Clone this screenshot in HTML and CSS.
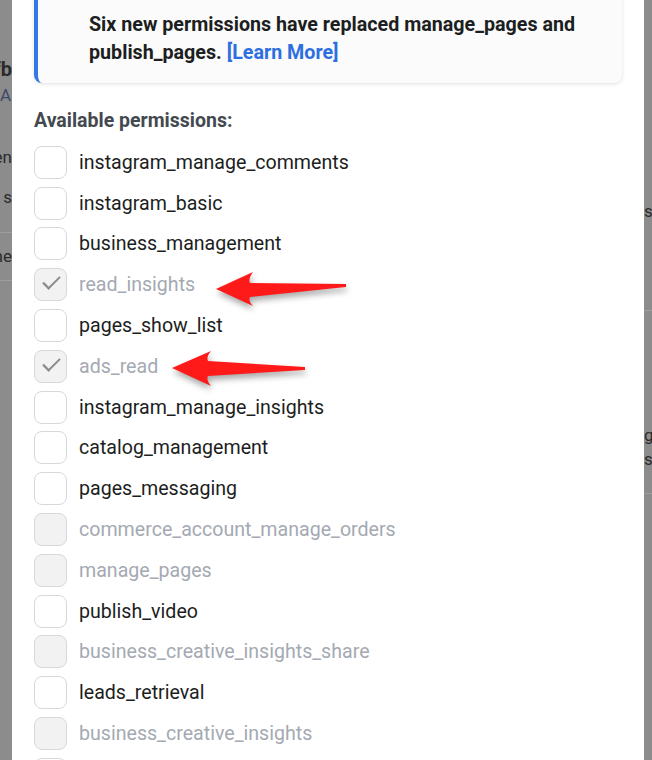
FILE: index.html
```html
<!DOCTYPE html>
<html>
<head>
  <title>Permissions</title>
  <link rel="stylesheet" href="styles.css">
</head>
<body>
  <div class="screen">
    <!-- the page behind the dialog, dimmed -->
    <div class="page-edge left">
      <div class="frag" style="height: 58px"></div>
      <div class="frag bold">fb</div>
      <div class="frag soft">A</div>
      <div class="frag" style="height: 36px"></div>
      <div class="frag">en</div>
      <div class="frag" style="height: 18px"></div>
      <div class="frag">s</div>
      <div class="frag" style="height: 24px"></div>
      <div class="rule"></div>
      <div class="frag" style="height: 12px"></div>
      <div class="frag">ne</div>
      <div class="frag" style="height: 13px"></div>
      <div class="rule"></div>
    </div>

    <div class="dialog">
      <div class="notice">
        Six new permissions have replaced manage_pages and publish_pages. <a href="#">[Learn More]</a>
      </div>

      <h3 class="list-title">Available permissions:</h3>

      <ul class="perms">
        <li><span class="box"></span>instagram_manage_comments</li>
        <li><span class="box"></span>instagram_basic</li>
        <li><span class="box"></span>business_management</li>
        <li class="off"><span class="box checked"></span>read_insights</li>
        <li><span class="box"></span>pages_show_list</li>
        <li class="off"><span class="box checked"></span>ads_read</li>
        <li><span class="box"></span>instagram_manage_insights</li>
        <li><span class="box"></span>catalog_management</li>
        <li><span class="box"></span>pages_messaging</li>
        <li class="off"><span class="box"></span>commerce_account_manage_orders</li>
        <li class="off"><span class="box"></span>manage_pages</li>
        <li><span class="box"></span>publish_video</li>
        <li class="off"><span class="box"></span>business_creative_insights_share</li>
        <li><span class="box"></span>leads_retrieval</li>
        <li class="off"><span class="box"></span>business_creative_insights</li>
        <li><span class="box"></span></li>
      </ul>

      <!-- red pointers drawn over the list -->
      <svg class="pointers" width="632" height="760" viewBox="12 0 632 760">
        <path d="M216,289 L253,272 Q248,279 250,283 L346,284 L346,287 L250,297 Q248,301 253,306 Z"/>
        <path d="M172,368 L211,351 Q206,357 208,361 L305,367 L305,370 L208,376 Q206,380 211,386 Z"/>
      </svg>
    </div>

    <div class="page-edge right">
      <div class="frag" style="height: 200px"></div>
      <div class="frag">s</div>
      <div class="frag" style="height: 88px"></div>
      <div class="rule"></div>
      <div class="frag" style="height: 113px"></div>
      <div class="frag">g</div>
      <div class="frag" style="height: 2px"></div>
      <div class="frag">s</div>
      <div class="frag" style="height: 23px"></div>
      <div class="rule"></div>
    </div>
  </div>
</body>
</html>
```

FILE: styles.css
```css
html, body {
  margin: 0;
  padding: 0;
  height: 100%;
}

body {
  background-color: #8c8c8c;
  font-family: Roboto, "Liberation Sans", sans-serif;
  overflow: hidden;
}

.screen {
  display: flex;
  height: 760px;
}

.page-edge {
  display: flex;
  flex-direction: column;
  overflow: hidden;
  color: #2a2a2a;
  font-size: 17px;
}

.page-edge.left {
  width: 12px;
}

.page-edge.right {
  width: 8px;
}

.frag {
  display: flex;
  height: 22px;
  line-height: 22px;
  white-space: nowrap;
  flex-shrink: 0;
}

.left .frag {
  justify-content: flex-end;
}

.frag.bold {
  font-weight: bold;
  font-size: 20px;
}

.frag.soft {
  color: #3d4a66;
  justify-content: flex-start;
  height: 30px;
  line-height: 30px;
}

.rule {
  height: 1px;
  background-color: #9e9e9e;
  flex-shrink: 0;
}

.dialog {
  position: relative;
  width: 632px;
  background-color: white;
  padding: 0 22px;
  box-sizing: border-box;
  overflow: hidden;
}

.notice {
  margin-top: -15px;
  width: 588px;
  box-sizing: border-box;
  padding: 26px 20px 16px 51px;
  background-color: #fbfbfb;
  border-left: 4px solid #3578e5;
  border-radius: 8px;
  box-shadow: 0 1px 4px rgba(0, 0, 0, 0.12);
  font-size: 19.7px;
  line-height: 28px;
  font-weight: bold;
  color: #1c1e21;
}

.notice a {
  color: #2d6fe0;
  text-decoration: none;
}

.list-title {
  margin: 26px 0 9px 0;
  font-size: 19.5px;
  line-height: 24px;
  color: #444950;
}

.perms {
  list-style: none;
  margin: 0;
  padding: 0;
}

.perms li {
  display: flex;
  align-items: center;
  gap: 12px;
  height: 40.8px;
  font-size: 19.6px;
  color: #1c1e21;
}

.perms li.off {
  color: #a4a9b2;
}

.box {
  width: 31px;
  height: 31px;
  border: 1px solid #d6d8dc;
  border-radius: 8px;
  background-color: white;
  flex-shrink: 0;
  position: relative;
}

.off .box {
  background-color: #f2f2f2;
}

.box.checked::after {
  content: "";
  position: absolute;
  left: 9px;
  top: 7px;
  width: 13px;
  height: 7px;
  border-left: 2px solid #8a8d91;
  border-bottom: 2px solid #8a8d91;
  transform: rotate(-45deg) scaleX(1.15);
}

.pointers {
  position: absolute;
  left: 0;
  top: 0;
  pointer-events: none;
}

.pointers path {
  fill: #ff1a1a;
  filter: drop-shadow(1px 4px 3px rgba(0, 0, 0, 0.35));
}
```
